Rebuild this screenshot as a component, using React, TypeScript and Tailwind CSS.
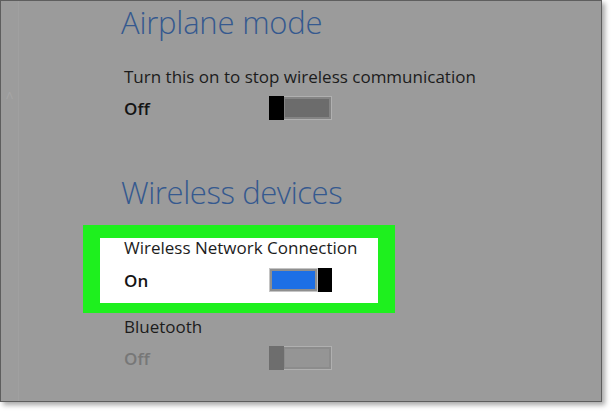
import React from "react";

type ToggleProps = {
  state: "on" | "off" | "disabled";
};

function Toggle({ state }: ToggleProps) {
  if (state === "on") {
    return (
      <div className="flex h-[24px] w-[63px] shrink-0">
        <div className="flex-1 border border-[#c4c4c4] bg-[#8f8f8f] p-[2px]">
          <div className="h-full w-full bg-[#1d6fe6]" />
        </div>
        <div className="w-[14px] bg-black" />
      </div>
    );
  }

  const thumb = state === "off" ? "bg-black" : "bg-[#6e6e6e]";
  const fill = state === "off" ? "bg-[#6c6c6c]" : "bg-[#959595]";
  const ring = state === "off" ? "bg-[#848484]" : "bg-[#8c8c8c]";

  return (
    <div className="flex h-[24px] w-[63px] shrink-0">
      <div className={`w-[15px] ${thumb}`} />
      <div className={`flex-1 border border-l-0 border-[#b0b0b0] p-[2px] pl-[1px] ${ring}`}>
        <div className={`h-full w-full ${fill}`} />
      </div>
    </div>
  );
}

function SettingRow({
  value,
  state,
  muted = false,
}: {
  value: string;
  state: "on" | "off" | "disabled";
  muted?: boolean;
}) {
  return (
    <div className="flex items-start">
      <div
        className={`mt-[3px] w-[145px] text-[17px] font-semibold leading-[20px] ${
          muted ? "text-[#777777]" : "text-[#141414]"
        }`}
      >
        {value}
      </div>
      <Toggle state={state} />
    </div>
  );
}

export default function App() {
  return (
    <div
      className="h-[411px] w-[611px] bg-white"
      style={{ fontFamily: '"Open Sans", "Liberation Sans", sans-serif' }}
    >
      <div className="flex h-[402px] w-[602px] overflow-hidden border border-[#5e5e5e] bg-[#9b9b9b] shadow-[3px_3px_5px_rgba(0,0,0,0.35)]">
        {/* left edge of the settings pane */}
        <div className="flex w-[18px] shrink-0 flex-col items-center border-r border-[#a0a0a0] bg-[#9c9c9c] pt-[88px] text-[14px] leading-none text-[#a5a5a5]">
          ˄
        </div>

        <div className="flex flex-col pl-[105px] text-[#1c1c1c]">
          <h1 className="-ml-[3px] pt-[1px] text-[31px] font-light leading-[40px] tracking-[-0.2px] text-[#35598f]">
            Airplane mode
          </h1>
          <p className="mt-[25px] text-[17px] leading-[20px]">
            Turn this on to stop wireless communication
          </p>
          <div className="mt-[9px]">
            <SettingRow value="Off" state="off" />
          </div>

          <h2 className="-ml-[3px] mt-[52px] text-[31px] font-light leading-[40px] tracking-[-0.4px] text-[#35598f]">
            Wireless devices
          </h2>

          {/* highlighted setting */}
          <div className="-ml-[41px] mt-[13px] w-[312px] border-x-[17px] border-b-[10px] border-t-[15px] border-[#1ef01e]">
            <div className="bg-white pb-[11px] pl-[24px]">
              <p className="-mt-[2px] text-[17px] leading-[20px]">
                Wireless Network Connection
              </p>
              <div className="mt-[10px]">
                <SettingRow value="On" state="on" />
              </div>
            </div>
          </div>

          <p className="mt-[4px] text-[17px] leading-[20px]">Bluetooth</p>
          <div className="mt-[9px]">
            <SettingRow value="Off" state="disabled" muted />
          </div>
        </div>
      </div>
    </div>
  );
}
